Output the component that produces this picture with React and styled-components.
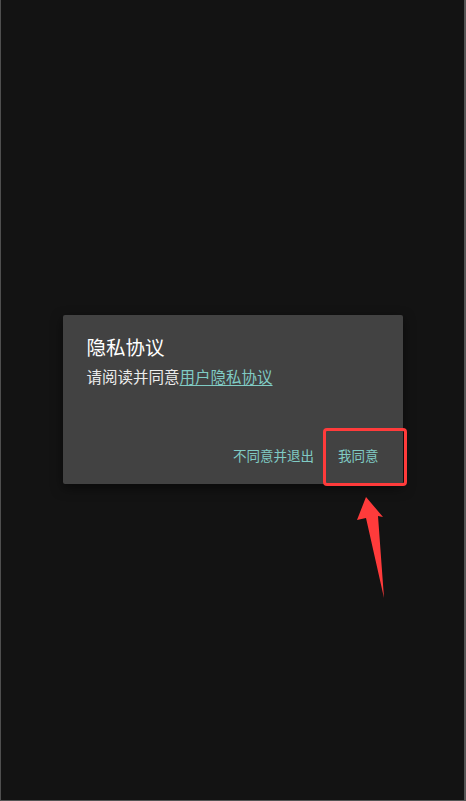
import { createGlobalStyle, styled } from "styled-components";

const GlobalStyle = createGlobalStyle`
  html, body {
    margin: 0;
    padding: 0;
    background: #131313;
  }
  body {
    font-family: "Noto Sans CJK SC", "Noto Sans", sans-serif;
  }
`;

const Screen = styled.div`
  position: relative;
  box-sizing: border-box;
  width: 466px;
  height: 801px;
  background: #131313;
  border-left: 1px solid #4f4f4f;
  border-right: 2px solid #555;
  border-bottom: 1px solid #555;
  display: flex;
  align-items: center;
  justify-content: center;
  overflow: hidden;
`;

const StatusMark = styled.div`
  position: absolute;
  left: -1px;
  top: 0;
  width: 1px;
  height: 12px;
  background: #1d4d73;
`;

const DialogWrap = styled.div`
  position: relative;
  margin-top: -2px;
`;

const Dialog = styled.div`
  box-sizing: border-box;
  width: 340px;
  height: 169px;
  background: #424242;
  border-radius: 2px;
  box-shadow: 0 4px 12px rgba(0, 0, 0, 0.5);
  display: flex;
  flex-direction: column;
  padding-top: 18px;
`;

const Title = styled.div`
  padding: 0 24px;
  font-size: 19.5px;
  line-height: 28px;
  color: #ffffff;
`;

const Message = styled.div`
  margin-top: 3px;
  padding: 0 24px;
  font-size: 15.5px;
  line-height: 24px;
  color: #ececec;
`;

const Link = styled.span`
  color: #80cbc4;
  text-decoration: underline;
  text-underline-offset: 2px;
`;

const Actions = styled.div`
  margin-top: auto;
  display: flex;
  justify-content: flex-end;
  gap: 8px;
  padding: 0 16px 11px 0;
`;

const ActionButton = styled.button`
  height: 36px;
  padding: 0 8px;
  border: none;
  background: transparent;
  font-family: inherit;
  font-size: 13.5px;
  color: #80cbc4;
  cursor: pointer;
`;

const Highlight = styled.div`
  position: absolute;
  left: 260px;
  top: 113px;
  width: 84px;
  height: 58px;
  box-sizing: border-box;
  border: 3px solid #ff3b3b;
  border-radius: 4px;
  pointer-events: none;
`;

const Arrow = styled.svg`
  position: absolute;
  left: 287px;
  top: 175px;
  pointer-events: none;
`;

export default function App() {
  return (
    <>
      <GlobalStyle />
      <Screen>
        <StatusMark />
        <DialogWrap>
          <Dialog>
            <Title>隐私协议</Title>
            <Message>
              请阅读并同意<Link>用户隐私协议</Link>
            </Message>
            <Actions>
              <ActionButton>不同意并退出</ActionButton>
              <ActionButton>我同意</ActionButton>
            </Actions>
          </Dialog>
          <Highlight />
          <Arrow width="40" height="112" viewBox="0 0 40 112">
            <polygon points="16,7 33,27 28,26 34,108 16,28 7,30" fill="#ff3b3b" />
          </Arrow>
        </DialogWrap>
      </Screen>
    </>
  );
}
